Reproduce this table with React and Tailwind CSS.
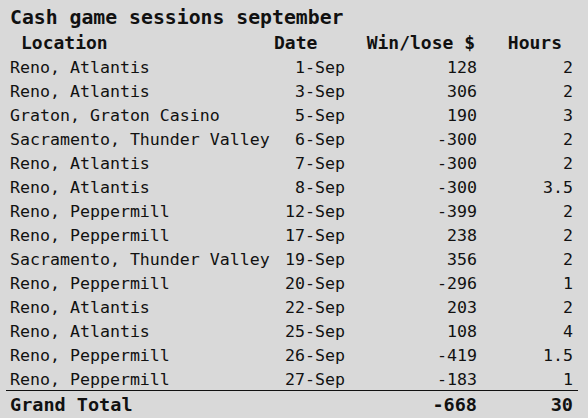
const rows = [
  ["Reno, Atlantis", "1-Sep", "128", "2"],
  ["Reno, Atlantis", "3-Sep", "306", "2"],
  ["Graton, Graton Casino", "5-Sep", "190", "3"],
  ["Sacramento, Thunder Valley", "6-Sep", "-300", "2"],
  ["Reno, Atlantis", "7-Sep", "-300", "2"],
  ["Reno, Atlantis", "8-Sep", "-300", "3.5"],
  ["Reno, Peppermill", "12-Sep", "-399", "2"],
  ["Reno, Peppermill", "17-Sep", "238", "2"],
  ["Sacramento, Thunder Valley", "19-Sep", "356", "2"],
  ["Reno, Peppermill", "20-Sep", "-296", "1"],
  ["Reno, Atlantis", "22-Sep", "203", "2"],
  ["Reno, Atlantis", "25-Sep", "108", "4"],
  ["Reno, Peppermill", "26-Sep", "-419", "1.5"],
  ["Reno, Peppermill", "27-Sep", "-183", "1"],
];

const grid = "grid grid-cols-[255px_80px_132px_96px] pl-[10px]";

export default function App() {
  return (
    <div className="w-[588px] h-[418px] overflow-hidden bg-[#d9d9d9] text-[#111] font-['DejaVu_Sans_Mono',monospace]">
      {/* title */}
      <div className="h-[34px] pl-[10px] text-[19.8px] font-bold leading-[36px]">
        Cash game sessions september
      </div>

      {/* header */}
      <div className={`${grid} h-[22px] items-start text-[18px] font-bold leading-[18px]`}>
        <div className="pl-[11px]">Location</div>
        <div className="pl-[9px]">Date</div>
        <div className="text-right pr-[2px]">Win/lose $</div>
        <div className="text-right pr-[11px]">Hours</div>
      </div>

      {rows.map((r, i) => (
        <div key={i} className={`${grid} h-[24px] items-center text-[16.6px]`}>
          <div className="whitespace-nowrap">{r[0]}</div>
          <div className="text-right">{r[1]}</div>
          <div className="text-right">{r[2]}</div>
          <div className="text-right">{r[3]}</div>
        </div>
      ))}

      <div className="-mt-[2px] ml-[6px] w-[572px] h-px bg-[#111]" />

      {/* total */}
      <div className={`${grid} h-[23px] items-center text-[18.5px] font-bold`}>
        <div>Grand Total</div>
        <div />
        <div className="text-right">-668</div>
        <div className="text-right">30</div>
      </div>
    </div>
  );
}
